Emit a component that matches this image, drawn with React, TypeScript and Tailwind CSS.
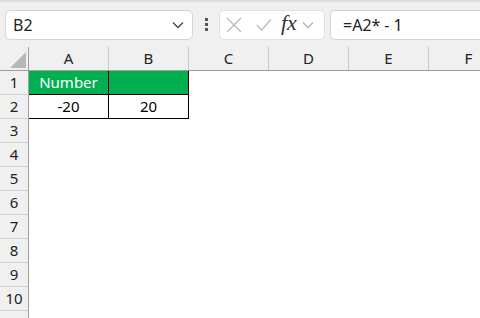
import React from "react";

const cols = ["A", "B", "C", "D", "E", "F"];
const rows = [1, 2, 3, 4, 5, 6, 7, 8, 9, 10, 11];

function Chevron({ className }: { className?: string }) {
  return (
    <svg width="12" height="8" viewBox="0 0 12 8" className={className}>
      <path d="M1 1.5 L6 6.5 L11 1.5" fill="none" stroke="currentColor" strokeWidth="1.3" />
    </svg>
  );
}

export default function App() {
  return (
    <div
      className="w-[480px] h-[318px] overflow-hidden bg-white text-[#222]"
      style={{ fontFamily: '"Noto Sans", "Open Sans", sans-serif' }}
    >
      {/* formula bar */}
      <div className="h-[47px] bg-[#f0f0f0] flex flex-col">
        <div className="h-[3px] bg-gradient-to-b from-[#d6d6d6] to-[#f0f0f0]" />
        <div className="flex items-center h-[29px] mt-[7px]">
          <div className="ml-[5px] w-[188px] h-[30px] bg-white border border-[#d4d4d4] rounded-[5px] flex items-center justify-between pl-[7px] pr-[8px]">
            <span className="text-[16px] leading-none">B2</span>
            <Chevron className="text-[#444]" />
          </div>
          <div className="w-[26px] flex flex-col items-center gap-[2px]">
            <span className="w-[3px] h-[3px] bg-[#555]" />
            <span className="w-[3px] h-[3px] bg-[#555]" />
            <span className="w-[3px] h-[3px] bg-[#555]" />
          </div>
          <div className="w-[106px] h-[30px] bg-white border border-[#e0e0e0] rounded-[5px] flex items-center pl-[6px]">
            <svg width="16" height="16" viewBox="0 0 16 16" className="text-[#b9b9b9]">
              <path d="M1 1 L15 15 M15 1 L1 15" stroke="currentColor" strokeWidth="1.2" />
            </svg>
            <svg width="16" height="14" viewBox="0 0 16 14" className="ml-[14px] text-[#b9b9b9]">
              <path d="M1 7 L5.5 12 L15 1.5" fill="none" stroke="currentColor" strokeWidth="1.2" />
            </svg>
            <span
              className="ml-[9px] text-[22px] italic leading-none text-[#333] -mt-[4px]"
              style={{ fontFamily: '"Liberation Serif", serif' }}
            >
              fx
            </span>
            <Chevron className="ml-[5px] text-[#b5b5b5]" />
          </div>
          <div className="ml-[5px] flex-1 h-[30px] bg-white border border-[#d4d4d4] rounded-l-[5px] border-r-0 flex items-center pl-[12px]">
            <span className="text-[16px] leading-none">
              =A2*<span className="mx-[4px]">-</span>1
            </span>
          </div>
        </div>
      </div>

      {/* column headers */}
      <div className="flex h-[24px] bg-[#f0f0f0] border-b border-[#9e9e9e]">
        <div className="w-[29px] shrink-0 border-r border-[#9e9e9e] flex items-end justify-end pr-[2px] pb-[2px]">
          <svg width="16" height="16" viewBox="0 0 16 16">
            <path d="M16 0 L16 16 L0 16 Z" fill="#b7b7b7" />
          </svg>
        </div>
        {cols.map((c) => (
          <div
            key={c}
            className="w-[80px] shrink-0 border-r border-[#c8c8c8] flex items-center justify-center text-[15px]"
          >
            {c}
          </div>
        ))}
      </div>

      {/* rows */}
      {rows.map((r) => (
        <div key={r} className="flex h-[24px]">
          <div className="w-[29px] shrink-0 bg-[#f0f0f0] border-r border-b border-r-[#9e9e9e] border-b-[#d0d0d0] flex items-center justify-center text-[15px]">
            {r <= 10 ? r : ""}
          </div>
          {r === 1 && (
            <>
              <div className="w-[80px] shrink-0 bg-[#00b050] border-r border-b border-black text-white text-[15px] flex items-center justify-center">
                Number
              </div>
              <div className="w-[80px] shrink-0 bg-[#00b050] border-r border-b border-black" />
            </>
          )}
          {r === 2 && (
            <>
              <div className="w-[80px] shrink-0 border-r border-b border-black text-black text-[15px] flex items-center justify-center">
                -20
              </div>
              <div className="w-[80px] shrink-0 border-r border-b border-black text-black text-[15px] flex items-center justify-center">
                20
              </div>
            </>
          )}
        </div>
      ))}
    </div>
  );
}
